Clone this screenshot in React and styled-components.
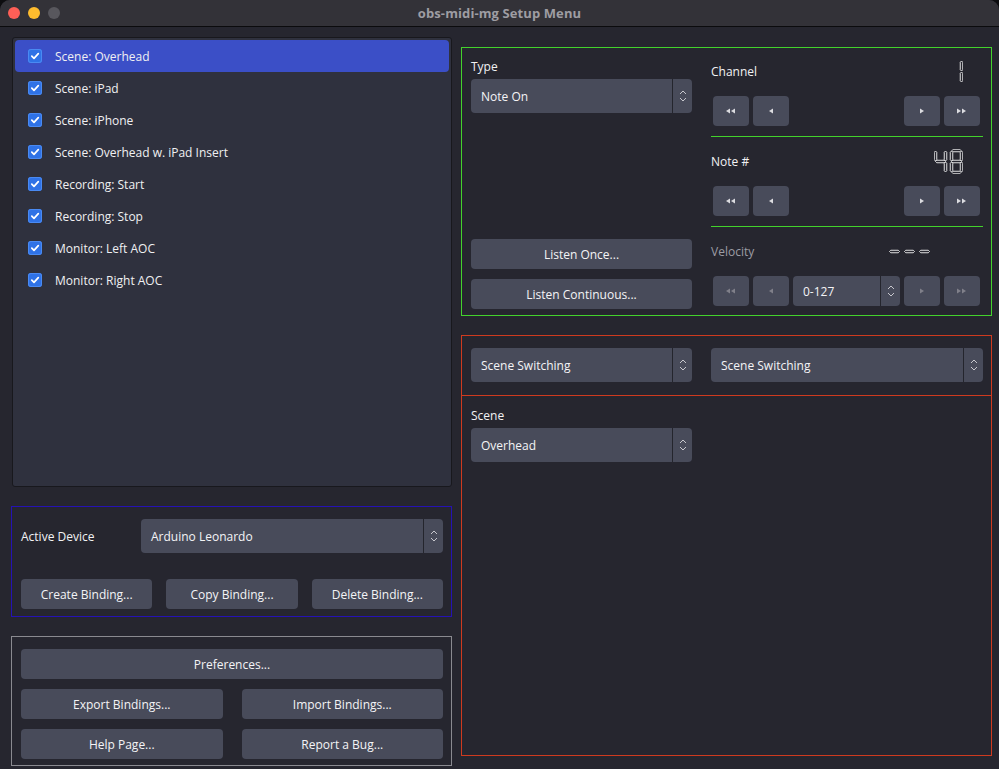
import React from "react";
import styled, { createGlobalStyle } from "styled-components";

const Global = createGlobalStyle`
  html, body { margin: 0; padding: 0; background: #0d0d10; }
  body { font-family: "Open Sans", "Noto Sans", sans-serif; }
  #root { width: 999px; height: 769px; }
  * { box-sizing: border-box; }
`;

const Window = styled.div`
  width: 999px;
  height: 769px;
  background: #26262f;
  border-radius: 10px 10px 0 0;
  overflow: hidden;
  display: flex;
  flex-direction: column;
  color: #f2f2f4;
  font-size: 12px;
`;

const TitleBar = styled.div`
  height: 27px;
  flex: none;
  background: #333238;
  border-bottom: 1px solid #0b0b0d;
  display: grid;
  grid-template-columns: 1fr auto 1fr;
  align-items: center;
`;

const Lights = styled.div`
  display: flex;
  gap: 8px;
  padding-left: 8px;
`;

const Light = styled.span`
  width: 12px;
  height: 12px;
  border-radius: 50%;
  background: ${(p) => p.$c};
`;

const Title = styled.div`
  font-family: "Open Sans", sans-serif;
  font-weight: 700;
  font-size: 13px;
  color: #9e9da3;
  letter-spacing: 0.1px;
`;

const Body = styled.div`
  flex: 1;
  display: flex;
  gap: 9px;
  padding-left: 11px;
`;

const LeftCol = styled.div`
  width: 441px;
  flex: none;
  display: flex;
  flex-direction: column;
  padding-top: 10px;
`;

const RightCol = styled.div`
  width: 531px;
  flex: none;
  display: flex;
  flex-direction: column;
  padding-top: 20px;
`;

const List = styled.div`
  margin-left: 1px;
  height: 450px;
  background: #2f313e;
  border: 1px solid #18181d;
  border-radius: 3px;
  padding: 2px;
  display: flex;
  flex-direction: column;
`;

const Row = styled.div`
  height: 32px;
  flex: none;
  display: flex;
  align-items: center;
  padding-left: 13px;
  gap: 13px;
  border-radius: 4px;
  background: ${(p) => (p.$selected ? "#3b4fc7" : "transparent")};
  color: #f0f0f2;
`;

const Check = styled.span`
  width: 14px;
  height: 14px;
  border-radius: 3px;
  background: #2f72e6;
  box-shadow: inset 0 0 0 1px #4a8af2;
  display: flex;
  align-items: center;
  justify-content: center;
`;

const Group = styled.div`
  border: 1px solid ${(p) => p.$border};
  padding: ${(p) => p.$pad};
  margin-top: ${(p) => p.$mt || 0}px;
  display: flex;
  flex-direction: column;
  gap: ${(p) => p.$gap || 0}px;
`;

const DeviceRow = styled.div`
  display: flex;
  align-items: center;
`;

const DeviceLabel = styled.div`
  width: 120px;
  flex: none;
`;

const BtnRow = styled.div`
  display: flex;
  gap: ${(p) => p.$gap}px;
`;

const Button = styled.div`
  height: 30px;
  flex: ${(p) => (p.$fill ? "1 1 0" : "none")};
  background: #484b5a;
  border-radius: 4px;
  display: flex;
  align-items: center;
  justify-content: center;
  color: #f4f4f6;
`;

const ComboBox = styled.div`
  height: 34px;
  width: ${(p) => (p.$w ? `${p.$w}px` : "auto")};
  flex: ${(p) => (p.$fill ? "1 1 0" : "none")};
  background: #484b5a;
  border-radius: 4px;
  display: flex;
  align-items: stretch;
`;

const ComboText = styled.div`
  flex: 1;
  display: flex;
  align-items: center;
  padding-left: 10px;
  color: #f4f4f6;
`;

const ComboArrows = styled.div`
  width: 20px;
  border-left: 1px solid #24252d;
  display: flex;
  align-items: center;
  justify-content: center;
`;

const GreenBox = styled.div`
  border: 1px solid #43d22c;
  padding: 8px 8px 9px 9px;
  display: grid;
  grid-template-columns: 221px 1fr;
  column-gap: 19px;
`;

const TypeCol = styled.div`
  display: flex;
  flex-direction: column;
  margin-bottom: -3px;
`;

const FieldLabel = styled.div`
  height: 18px;
  margin-top: ${(p) => p.$mt || 0}px;
  margin-bottom: 4px;
  display: flex;
  align-items: center;
  color: ${(p) => (p.$dim ? "#9c9ca4" : "#f2f2f4")};
`;

const ListenStack = styled.div`
  margin-top: auto;
  display: flex;
  flex-direction: column;
  gap: 10px;
`;

const MidiCol = styled.div`
  display: flex;
  flex-direction: column;
`;

const Header = styled.div`
  height: 30px;
  display: flex;
  align-items: center;
  justify-content: space-between;
  padding-right: ${(p) => p.$trail}px;
  color: ${(p) => (p.$dim ? "#9c9ca4" : "#f2f2f4")};
`;

const StepRow = styled.div`
  margin-top: 10px;
  height: 30px;
  display: flex;
  gap: 4px;
  padding: 0 3px 0 2px;
`;

const StepBtn = styled.div`
  width: 36px;
  height: 30px;
  flex: none;
  background: #484b5a;
  border-radius: 4px;
  display: flex;
  align-items: center;
  justify-content: center;
`;

const Spacer = styled.div`
  flex: 1;
`;

const SpinBox = styled.div`
  flex: 1;
  height: 30px;
  background: #484b5a;
  border-radius: 4px;
  display: flex;
  align-items: stretch;
`;

const GreenRule = styled.div`
  height: 1px;
  background: #43d22c;
  margin: 10px 0 9px;
`;

const RedBox = styled.div`
  margin-top: 19px;
  height: 421px;
  border: 1px solid #cf3a1f;
  display: flex;
  flex-direction: column;
`;

const RedTop = styled.div`
  display: grid;
  grid-template-columns: 221px 1fr;
  column-gap: 19px;
  padding: 12px 8px 13px 9px;
  border-bottom: 1px solid #cf3a1f;
`;

const RedBottom = styled.div`
  padding: 10px 9px;
  display: flex;
  flex-direction: column;
`;

const Chevrons = () => (
  <svg width="8" height="14" viewBox="0 0 8 14">
    <path d="M1 5 L4 2 L7 5" stroke="#c7c7cd" strokeWidth="1" fill="none" />
    <path d="M1 9 L4 12 L7 9" stroke="#c7c7cd" strokeWidth="1" fill="none" />
  </svg>
);

const Combo = ({ text, w, fill }) => (
  <ComboBox $w={w} $fill={fill}>
    <ComboText>{text}</ComboText>
    <ComboArrows>
      <Chevrons />
    </ComboArrows>
  </ComboBox>
);

const Tri = ({ dir, count, dim }) => {
  const fill = dim ? "#80808a" : "#dcdce0";
  const tris = [];
  for (let i = 0; i < count; i++) {
    const x = i * 5;
    const pts =
      dir === "left"
        ? `${x},3 ${x + 4},0.5 ${x + 4},5.5`
        : `${x},0.5 ${x + 4},3 ${x},5.5`;
    tris.push(<polygon key={i} points={pts} fill={fill} />);
  }
  return (
    <svg width={count * 5} height="6" viewBox={`0 0 ${count * 5} 6`}>
      {tris}
    </svg>
  );
};

const SEGS = {
  "0": "abcdef",
  "1": "bc",
  "2": "abged",
  "3": "abgcd",
  "4": "fgbc",
  "5": "afgcd",
  "6": "afgedc",
  "7": "abc",
  "8": "abcdefg",
  "9": "abcdfg",
  "-": "g",
  " ": "",
};

const T = 1.25;
const hSeg = (x1, x2, y) =>
  `${x1},${y} ${x1 + T},${y - T} ${x2 - T},${y - T} ${x2},${y} ${x2 - T},${y + T} ${x1 + T},${y + T}`;
const vSeg = (x, y1, y2) =>
  `${x},${y1} ${x + T},${y1 + T} ${x + T},${y2 - T} ${x},${y2} ${x - T},${y2 - T} ${x - T},${y1 + T}`;

const segPoints = (s, ox) => {
  switch (s) {
    case "a": return hSeg(ox + 2, ox + 11, 1.5);
    case "b": return vSeg(ox + 11.5, 2, 12);
    case "c": return vSeg(ox + 11.5, 13, 23);
    case "d": return hSeg(ox + 2, ox + 11, 23.5);
    case "e": return vSeg(ox + 1.5, 13, 23);
    case "f": return vSeg(ox + 1.5, 2, 12);
    case "g": return hSeg(ox + 1.5, ox + 11.5, 12.5);
    default: return "";
  }
};

const Lcd = ({ value, pitch = 16 }) => {
  const chars = value.split("");
  const w = chars.length * pitch - (pitch - 13);
  return (
    <svg width={w} height="25" viewBox={`0 0 ${w} 25`}>
      {chars.map((c, i) =>
        (SEGS[c] || "").split("").map((s) => (
          <polygon
            key={`${i}${s}`}
            points={segPoints(s, i * pitch)}
            fill="none"
            stroke="#f4f4f4"
            strokeWidth="0.9"
          />
        ))
      )}
    </svg>
  );
};

const Checkmark = () => (
  <svg width="10" height="10" viewBox="0 0 10 10">
    <path d="M1.8 5.2 L4 7.4 L8.3 2.6" stroke="#fff" strokeWidth="1.7" fill="none" strokeLinecap="round" strokeLinejoin="round" />
  </svg>
);

const items = [
  "Scene: Overhead",
  "Scene: iPad",
  "Scene: iPhone",
  "Scene: Overhead w. iPad Insert",
  "Recording: Start",
  "Recording: Stop",
  "Monitor: Left AOC",
  "Monitor: Right AOC",
];

const Steppers = ({ dim, children }) => (
  <StepRow>
    <StepBtn><Tri dir="left" count={2} dim={dim} /></StepBtn>
    <StepBtn><Tri dir="left" count={1} dim={dim} /></StepBtn>
    {children || <Spacer />}
    <StepBtn><Tri dir="right" count={1} dim={dim} /></StepBtn>
    <StepBtn><Tri dir="right" count={2} dim={dim} /></StepBtn>
  </StepRow>
);

export default function App() {
  return (
    <>
      <Global />
      <Window>
        <TitleBar>
          <Lights>
            <Light $c="#fe5f57" />
            <Light $c="#febc2e" />
            <Light $c="#58575d" />
          </Lights>
          <Title>obs-midi-mg Setup Menu</Title>
          <div />
        </TitleBar>
        <Body>
          <LeftCol>
            <List>
              {items.map((t, i) => (
                <Row key={t} $selected={i === 0}>
                  <Check><Checkmark /></Check>
                  {t}
                </Row>
              ))}
            </List>
            <Group $border="#2512b4" $pad="12px 8px 7px 9px" $mt={19} $gap={26}>
              <DeviceRow>
                <DeviceLabel>Active Device</DeviceLabel>
                <Combo text="Arduino Leonardo" fill />
              </DeviceRow>
              <BtnRow $gap={14}>
                <Button $fill>Create Binding...</Button>
                <Button $fill>Copy Binding...</Button>
                <Button $fill>Delete Binding...</Button>
              </BtnRow>
            </Group>
            <Group $border="#8a8a90" $pad="12px 8px 6px 9px" $mt={19} $gap={10}>
              <BtnRow $gap={19}>
                <Button $fill>Preferences...</Button>
              </BtnRow>
              <BtnRow $gap={19}>
                <Button $fill>Export Bindings...</Button>
                <Button $fill>Import Bindings...</Button>
              </BtnRow>
              <BtnRow $gap={19}>
                <Button $fill>Help Page...</Button>
                <Button $fill>Report a Bug...</Button>
              </BtnRow>
            </Group>
          </LeftCol>
          <RightCol>
            <GreenBox>
              <TypeCol>
                <FieldLabel $mt={1}>Type</FieldLabel>
                <Combo text="Note On" />
                <ListenStack>
                  <Button>Listen Once...</Button>
                  <Button>Listen Continuous...</Button>
                </ListenStack>
              </TypeCol>
              <MidiCol>
                <Header $trail={20}>
                  Channel
                  <Lcd value=" 1" />
                </Header>
                <Steppers />
                <GreenRule />
                <Header $trail={20}>
                  Note #
                  <Lcd value="48" />
                </Header>
                <Steppers />
                <GreenRule />
                <Header $trail={52} $dim>
                  Velocity
                  <Lcd value="---" pitch={15} />
                </Header>
                <Steppers dim>
                  <SpinBox>
                    <ComboText>0-127</ComboText>
                    <ComboArrows>
                      <Chevrons />
                    </ComboArrows>
                  </SpinBox>
                </Steppers>
              </MidiCol>
            </GreenBox>
            <RedBox>
              <RedTop>
                <Combo text="Scene Switching" />
                <Combo text="Scene Switching" />
              </RedTop>
              <RedBottom>
                <FieldLabel>Scene</FieldLabel>
                <Combo text="Overhead" w={221} />
              </RedBottom>
            </RedBox>
          </RightCol>
        </Body>
      </Window>
    </>
  );
}
